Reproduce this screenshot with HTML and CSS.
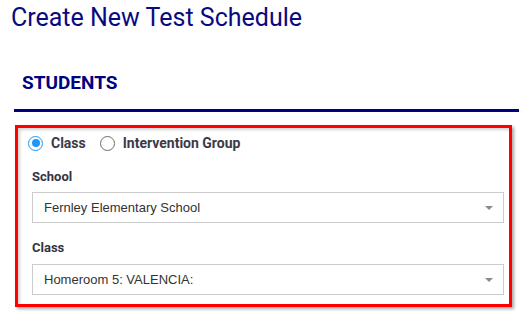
FILE: index.html
```html
<!DOCTYPE html>
<html>
<head>
<meta charset="utf-8">
<link rel="stylesheet" href="styles.css">
</head>
<body>
<div class="page">
  <h1 class="title">Create New Test Schedule</h1>
  <div class="section-head"><h2 class="section-title">STUDENTS</h2></div>
  <div class="card">
    <div class="radio-row">
      <label class="radio checked"><span class="radio-circle"></span><span class="radio-text">Class</span></label>
      <label class="radio"><span class="radio-circle"></span><span class="radio-text">Intervention Group</span></label>
    </div>
    <div class="field">
      <div class="field-label">School</div>
      <div class="select"><span class="select-text">Fernley Elementary School</span><span class="caret"></span></div>
    </div>
    <div class="field">
      <div class="field-label">Class</div>
      <div class="select"><span class="select-text">Homeroom 5: VALENCIA:</span><span class="caret"></span></div>
    </div>
  </div>
</div>
</body>
</html>
```

FILE: styles.css
```css
html, body {
  margin: 0;
  padding: 0;
  background: #ffffff;
}
body {
  font-family: Roboto, "Liberation Sans", sans-serif;
  width: 519px;
  height: 325px;
  overflow: hidden;
}
.page {
  display: flex;
  flex-direction: column;
}
.title {
  margin: 3px 0 0 11px;
  font-size: 25px;
  line-height: 29px;
  font-weight: 400;
  color: #0a0a80;
}
.section-head {
  margin: 40px 0 0 14px;
  padding: 0 0 15px 8px;
  border-bottom: 3px solid #000080;
}
.section-title {
  margin: 0;
  font-size: 19px;
  line-height: 22px;
  font-weight: 700;
  color: #000080;
}
.card {
  box-sizing: border-box;
  margin: 13px 0 0 15px;
  width: 497px;
  height: 182px;
  border: 3px solid #ff0000;
  background: #ffffff;
  box-shadow: 2px 2px 3px rgba(0, 0, 0, 0.35), inset 2px 2px 3px rgba(0, 0, 0, 0.18);
  padding: 6px 5px 0 14px;
  display: flex;
  flex-direction: column;
}
.radio-row {
  display: flex;
  align-items: center;
  height: 18px;
  gap: 14px;
}
.radio {
  display: flex;
  align-items: center;
  gap: 8px;
  margin-left: -4px;
}
.radio + .radio {
  margin-left: 0;
}
.radio-circle {
  box-sizing: border-box;
  width: 15px;
  height: 15px;
  border-radius: 50%;
  border: 1.5px solid #6d6d6d;
  display: flex;
  align-items: center;
  justify-content: center;
}
.radio.checked .radio-circle {
  border-color: #2196f3;
}
.radio.checked .radio-circle::after {
  content: "";
  width: 8px;
  height: 8px;
  border-radius: 50%;
  background: #2196f3;
}
.radio-text {
  font-size: 14px;
  line-height: 18px;
  font-weight: 700;
  color: #3a3a48;
}
.field {
  display: flex;
  flex-direction: column;
}
.field-label {
  margin-top: 17px;
  font-size: 13px;
  line-height: 16px;
  font-weight: 700;
  color: #333340;
}
.select {
  box-sizing: border-box;
  margin-top: 7px;
  height: 31px;
  border: 1px solid #cccccc;
  display: flex;
  align-items: center;
  justify-content: space-between;
  padding: 0 10px 0 11px;
}
.field + .field .select {
  margin-top: 8px;
}
.select-text {
  font-family: "Liberation Sans", Arial, sans-serif;
  font-size: 13px;
  color: #333333;
}
.caret {
  width: 0;
  height: 0;
  border-left: 4px solid transparent;
  border-right: 4px solid transparent;
  border-top: 4px solid #8a8a8a;
  margin-top: 1px;
}
```
